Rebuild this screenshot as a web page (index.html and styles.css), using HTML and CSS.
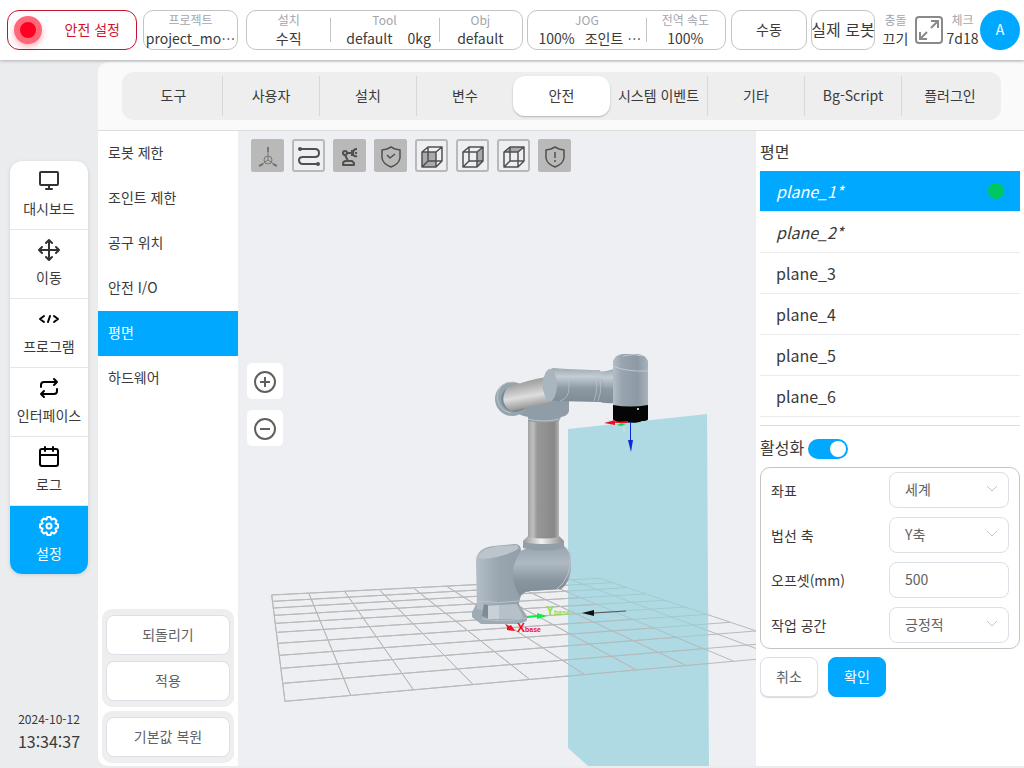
FILE: index.html
```
<!DOCTYPE html>
<html lang="ko">
<head>
    <meta charset="UTF-8">
    <meta name="viewport" content="width=device-width, initial-scale=1.0">
    <title>안전 설정</title>
    <link rel="stylesheet" href="styles.css">
</head>
<body>

    <header class="topbar">
        <button class="card safety"><span class="lamp"></span><span class="safety-text">안전 설정</span></button>
        <div class="card project">
            <div class="cell"><span class="label">프로젝트</span><span class="value">project_mo⋯</span></div>
        </div>
        <div class="card setup">
            <div class="cell"><span class="label">설치</span><span class="value">수직</span></div>
            <div class="cell wide"><span class="label">Tool</span><span class="value pair"><span>default</span><span>0kg</span></span></div>
            <div class="cell"><span class="label">Obj</span><span class="value">default</span></div>
        </div>
        <div class="card jog">
            <div class="cell wide"><span class="label">JOG</span><span class="value jog-value"><span>100%</span><span>조인트 ⋯</span></span></div>
            <div class="cell"><span class="label">전역 속도</span><span class="value">100%</span></div>
        </div>
        <button class="card mode">수동</button>
        <button class="card robot">실제 로봇</button>
        <div class="status">
            <div class="cell"><span class="label">충돌</span><span class="value">끄기</span></div>
            <button class="expand" aria-label="전체 화면">
                <svg width="30" height="30" viewBox="0 0 30 30" fill="none" stroke="#8a8a8a" stroke-width="2">
                    <rect x="2" y="2" width="26" height="26" rx="3"/>
                    <path d="M17 6h7v7M24 6l-7 7M6 17v7h7M6 24l7-7"/>
                </svg>
            </button>
            <div class="cell"><span class="label">체크</span><span class="value">7d18</span></div>
            <button class="avatar">A</button>
        </div>
    </header>

    <div class="layout">
        <aside class="sidebar">
            <nav class="nav">
                <a href="#">
                    <svg viewBox="0 0 24 24"><rect x="3" y="3" width="18" height="13" rx="1"/><path d="M12 16v4M9 20h6"/></svg>
                    대시보드
                </a>
                <a href="#">
                    <svg viewBox="0 0 24 24"><path d="M12 3v18M3 12h18M9 5l3-3 3 3M9 19l3 3 3-3M5 9l-3 3 3 3M19 9l3 3-3 3"/></svg>
                    이동
                </a>
                <a href="#">
                    <svg viewBox="0 0 24 24" class="dark"><path d="M7 9l-4 3 4 3M17 9l4 3-4 3M13 9l-2 6"/></svg>
                    프로그램
                </a>
                <a href="#">
                    <svg viewBox="0 0 24 24" class="dark"><path d="M4 11V9q0-3 3-3h13M17 3l3 3-3 3M20 13v2q0 3-3 3H4M7 15l-3 3 3 3"/></svg>
                    인터페이스
                </a>
                <a href="#">
                    <svg viewBox="0 0 24 24" class="dark"><rect x="3" y="4" width="18" height="17" rx="2"/><path d="M8 2v4M16 2v4M3 10h18"/></svg>
                    로그
                </a>
                <a href="#" class="active">
                    <svg viewBox="0 0 24 24"><circle cx="12" cy="12" r="2.500"/><path d="M21 10.500v3L18.400 14.600 19.500 17.200 17.200 19.500 14.600 18.400 13.500 21h-3L9.400 18.400 6.800 19.500 4.500 17.200 5.600 14.600 3 13.500v-3L5.600 9.400 4.500 6.800 6.800 4.500 9.400 5.600 10.500 3h3L14.600 5.600 17.200 4.500 19.500 6.800 18.400 9.400z"/></svg>
                    설정
                </a>
            </nav>
            <div class="clock">
                <div class="date">2024-10-12</div>
                <div class="time">13:34:37</div>
            </div>
        </aside>

        <main class="main">
            <div class="tabs">
                <button>도구</button>
                <button>사용자</button>
                <button>설치</button>
                <button>변수</button>
                <button class="active">안전</button>
                <button>시스템 이벤트</button>
                <button>기타</button>
                <button>Bg-Script</button>
                <button>플러그인</button>
            </div>

            <div class="content">
                <section class="submenu">
                    <a href="#">로봇 제한</a>
                    <a href="#">조인트 제한</a>
                    <a href="#">공구 위치</a>
                    <a href="#">안전 I/O</a>
                    <a href="#" class="active">평면</a>
                    <a href="#">하드웨어</a>
                    <div class="group first">
                        <button class="btn">되돌리기</button>
                        <button class="btn">적용</button>
                    </div>
                    <div class="group">
                        <button class="btn">기본값 복원</button>
                    </div>
                </section>

                <section class="viewer">
                    <svg class="scene" viewBox="238 131 518 635" preserveAspectRatio="xMidYMid slice">
                        <defs>
                            <linearGradient id="tube" x1="0" x2="1" y1="0" y2="0">
                                <stop offset="0" stop-color="#a2a3a4"/><stop offset=".16" stop-color="#bfbfbf"/>
                                <stop offset=".3" stop-color="#979797"/><stop offset=".85" stop-color="#888"/><stop offset="1" stop-color="#b5b5b5"/>
                            </linearGradient>
                            <linearGradient id="joint" x1="0" x2="1" y1="0" y2="0">
                                <stop offset="0" stop-color="#b4bec7"/><stop offset=".25" stop-color="#98a4ae"/>
                                <stop offset=".7" stop-color="#8d99a4"/><stop offset="1" stop-color="#a8b3bd"/>
                            </linearGradient>
                            <linearGradient id="across" x1="0" x2="0" y1="0" y2="1">
                                <stop offset="0" stop-color="#9da9b2"/><stop offset=".25" stop-color="#c4cdd5"/>
                                <stop offset=".6" stop-color="#8c98a2"/><stop offset="1" stop-color="#7f8b95"/>
                            </linearGradient>
                            <linearGradient id="arm" x1="0" x2=".25" y1="0" y2="1">
                                <stop offset="0" stop-color="#919191"/><stop offset=".3" stop-color="#a8a8a8"/>
                                <stop offset=".65" stop-color="#dedede"/><stop offset="1" stop-color="#929292"/>
                            </linearGradient>
                            <linearGradient id="ring" x1="0" x2="1" y1="0" y2="0">
                                <stop offset="0" stop-color="#999"/><stop offset=".45" stop-color="#f1f1f1"/><stop offset="1" stop-color="#8b8b8b"/>
                            </linearGradient>
                            <linearGradient id="bulge" x1="0" x2="0" y1="0" y2="1">
                                <stop offset="0" stop-color="#98a4ae"/><stop offset=".35" stop-color="#aeb9c2"/>
                                <stop offset=".7" stop-color="#88949e"/><stop offset="1" stop-color="#808c96"/>
                            </linearGradient>
                            <clipPath id="front"><path d="M0 0H955V100L1375 270V450H0z"/></clipPath>
                        </defs>

                        <!-- floor grid -->
                        <g transform="translate(250 560) scale(.3333)" fill="none" stroke="#b9b9b9" stroke-width="3">
                            <path id="grid" d="M65 105L105 424M177 101L302 406M285 96L490 389M390 91L669 373M493 86L839 358M592 80L1003 343M690 75L1158 329M785 71L1308 316M877 65L1450 303M965 60L1587 291M1050 55L1718 280M65 105L1050 55M68 124L1085 68M71 144L1130 83M74 166L1185 102M78 190L1245 121M82 217L1308 141M85 250L1375 163M90 286L1440 187M95 325L1518 213M100 370L1615 245M105 424L1718 280"/>
                        </g>

                        <!-- safety plane, the grid in front of it is drawn again -->
                        <path fill="#95d2db" opacity=".7" d="M568 429L707 414l2 352H588l-20-18z"/>
                        <g transform="translate(250 560) scale(.3333)" fill="none" stroke="#b9b9b9" stroke-width="3" clip-path="url(#front)">
                            <use href="#grid"/>
                        </g>

                        <!-- shoulder and base -->
                        <path fill="#9eabb5" d="M477 603l-5 9v5l9 7h35q9-1 11-4v-4l-8-12z"/>
                        <path fill="url(#joint)" d="M476 562q0-14 17-16l22-2q6 0 6 7l10-4 32-2q8 5 8 19 0 18-10 25l-31 2q-10 1-11 12l-1 6q-20 5-41 0z"/>
                        <path fill="url(#bulge)" d="M521 551l10-5 32 0q7 5 8 18 0 18-10 25l-31 2q-7 0-10 5-15-22 1-45z"/>
                        <path fill="#bcc5cc" d="M478 558q2-9 20-12l19-1 2 3q-6 5-22 9-12 3-19 1z"/>
                        <path fill="#d3d9df" opacity=".8" d="M488 606l11-1v14h-11z"/>
                        <path fill="#b6c0c9" d="M499 605l18-1 6 13-4 2h-20z"/>
                        <path fill="#7e8b94" d="M484 604l4 1v13l-6-2z"/>
                        <path fill="none" stroke="#b8c2c9" d="M570 552q3 25-14 38M478 601q20 3 41 0M482 619q23 4 44-1"/>
                        <path fill="#929fa9" d="M523 541h41v7q-20 5-41 0z"/>
                        <path fill="url(#ring)" d="M528 536h31l5 5q-2 3-20 3t-21-3z"/>
                        <path fill="url(#tube)" d="M528 420h31v117q-15 3-31 0z"/>

                        <!-- elbow and forearm -->
                        <path fill="#909da7" d="M512 409l53-17 4 9v10q-1 5-8 6l-2 4q-15 3-31 0v-4q-11-2-16-8z"/>
                        <ellipse cx="512" cy="399" rx="17" ry="17" fill="#96a4ae"/>
                        <ellipse cx="515" cy="399" rx="14" ry="13" fill="#7d8991"/>
                        <path fill="url(#arm)" d="M507 388q20-8 39-11 10 11 5 25l-40 9q-13-8-4-23z"/>
                        <path fill="none" stroke="#bac4cb" d="M514 382q-16-1-17 16 2 13 14 15M528 419q14 4 32 0"/>

                        <!-- wrist -->
                        <path fill="url(#across)" d="M597 372q8 0 17-3v34q-10 1-17-2z"/>
                        <path fill="url(#across)" d="M553 368q30 2 47 2 8 16 0 32l-45-1q-11-2-12-15 0-15 10-18z"/>
                        <ellipse cx="550" cy="385" rx="7" ry="16" fill="#a9b5bf"/>
                        <path fill="none" stroke="#bbc4cb" stroke-opacity=".7" d="M558 368q12 8 11 20 0 10-9 13M593 370q7 16 1 31M597 370q7 16 1 31"/>
                        <path fill="url(#joint)" d="M613 361q2-6 10-7h14q9 1 11 7v46h-35z"/>
                        <path fill="none" stroke="#c1cad1" d="M613 366q13 6 35 5M623 356q10-3 20 0"/>
                        <path fill="#050505" d="M613 405q17 3 35 0v14q0 2-6 2-4 3-22 1-7 0-7-3z"/>
                        <circle cx="638" cy="409" r="1" fill="#fff"/>

                        <!-- tool axes -->
                        <path fill="#18d33e" d="M617 425l4-2 5 1-5 2z"/>
                        <path fill="#e4142c" d="M604 423l11-3v2l13-1v2h-13v2z"/>
                        <path fill="#0a2bd8" d="M630 422h1v18h2l-2 12-3-12h2z"/>
                        <path stroke="#ddd" d="M624 427v5M607 418l3 3" fill="none"/>

                        <!-- base axes -->
                        <path fill="#12ea48" d="M527 616l10-1v-2l10 3-10 3v-2l-10 1z"/>
                        <path fill="#f0101e" d="M505 624l4 2 2-1 4 6-8-1v-3z"/>
                        <path fill="#111" d="M582 613l12-3v6z"/>
                        <path fill="none" stroke="#555" d="M594 613l32-2"/>
                        <text x="517" y="632" class="axis x-axis">X<tspan class="axis-sub">base</tspan></text>
                        <text x="546" y="615" class="axis y-axis">Y<tspan class="axis-sub">base</tspan></text>
                    </svg>

                    <div class="tools">
                        <button class="on" aria-label="축"><svg viewBox="0 0 33 33"><g stroke-width="1" stroke="#777"><circle cx="17" cy="21" r="4"/><path d="M17 8v13l-9 6M17 21l9 6"/><path d="M17 8v5M8 27l4-2M26 27l-4-2" stroke-width="2"/></g></svg></button>
                        <button aria-label="경로"><svg viewBox="0 0 33 33"><path d="M8 10h15q4 0 4 4t-4 4H11q-4 0-4 3 0 4 4 4h15"/><circle cx="8" cy="10" r="1"/><circle cx="26" cy="25" r="1"/></svg></button>
                        <button class="on" aria-label="로봇"><svg viewBox="0 0 33 33"><g><circle cx="12" cy="14" r="2"/><path d="M14 14h5M19 11v6M24 10q-4 0-4 4t4 3M22 14h2M12 16l3 6M10 25q0-3 3-3h6l2 2v2H10z"/></g></svg></button>
                        <button class="on" aria-label="안전"><svg viewBox="0 0 33 33"><g stroke-width="1.500"><path d="M17 8l-4 2-5 1v8q1 6 9 9 8-3 9-9v-8l-5-1z"/><path d="M13 16l3 3 5-4"/></g></svg></button>
                        <button aria-label="앞면"><svg viewBox="0 0 33 33"><path fill="#aaa" stroke="none" d="M7 13h14v15H7z"/><path stroke-width="1.500" d="M7 13h14v15H7zM7 13l6-5h14l-6 5M27 8v14l-6 6M13 8v14M13 22h14M13 22l-6 6"/></svg></button>
                        <button aria-label="옆면"><svg viewBox="0 0 33 33"><path fill="#aaa" stroke="none" d="M21 13l6-5v14l-6 6z"/><path stroke-width="1.500" d="M7 13h14v15H7zM7 13l6-5h14l-6 5M27 8v14l-6 6M13 8v14M13 22h14M13 22l-6 6"/></svg></button>
                        <button aria-label="윗면"><svg viewBox="0 0 33 33"><path fill="#aaa" stroke="none" d="M7 13l6-5h14l-6 5z"/><path stroke-width="1.500" d="M7 13h14v15H7zM7 13l6-5h14l-6 5M27 8v14l-6 6M13 8v14M13 22h14M13 22l-6 6"/></svg></button>
                        <button class="on" aria-label="경고"><svg viewBox="0 0 33 33"><g stroke-width="1.500"><path d="M17 8l-4 2-5 1v8q1 6 9 9 8-3 9-9v-8l-5-1z"/><path d="M17 13v6M17 21v2"/></g></svg></button>
                    </div>

                    <div class="zoom">
                        <button aria-label="확대"><svg viewBox="0 0 36 36"><circle cx="18" cy="19" r="10"/><path d="M13 19h10M18 14v10"/></svg></button>
                        <button aria-label="축소"><svg viewBox="0 0 36 36"><circle cx="18" cy="19" r="10"/><path d="M13 19h10"/></svg></button>
                    </div>
                </section>

                <section class="panel">
                    <h2>평면</h2>
                    <ul class="planes">
                        <li class="active changed">plane_1*<span class="dot"></span></li>
                        <li class="changed">plane_2*</li>
                        <li>plane_3</li>
                        <li>plane_4</li>
                        <li>plane_5</li>
                        <li>plane_6</li>
                    </ul>
                    <div class="enable">
                        <label for="enable">활성화</label>
                        <input type="checkbox" id="enable" class="switch" checked>
                    </div>
                    <div class="form">
                        <div class="row">
                            <label for="coord">좌표</label>
                            <div class="field"><select id="coord"><option>세계</option></select><svg viewBox="0 0 12 8"><path d="M1 1l5 5 5-5"/></svg></div>
                        </div>
                        <div class="row">
                            <label for="normal">법선 축</label>
                            <div class="field"><select id="normal"><option>Y축</option></select><svg viewBox="0 0 12 8"><path d="M1 1l5 5 5-5"/></svg></div>
                        </div>
                        <div class="row">
                            <label for="offset">오프셋(mm)</label>
                            <div class="field"><input type="text" id="offset" value="500"></div>
                        </div>
                        <div class="row">
                            <label for="space">작업 공간</label>
                            <div class="field"><select id="space"><option>긍정적</option></select><svg viewBox="0 0 12 8"><path d="M1 1l5 5 5-5"/></svg></div>
                        </div>
                    </div>
                    <div class="actions">
                        <button class="btn cancel">취소</button>
                        <button class="btn primary">확인</button>
                    </div>
                </section>
            </div>
        </main>
    </div>

</body>
</html>
```
FILE: styles.css
```
* {
    box-sizing: border-box;
    margin: 0;
    padding: 0;
}

body {
    display: flex;
    flex-direction: column;
    min-height: 100vh;
    background: #ebecee;
    color: #3a3a3a;
    font-family: "Noto Sans CJK KR", "Noto Sans", sans-serif;
    font-size: 14px;
    line-height: 20px;
}

button, input, select {
    font: inherit;
    color: inherit;
}

button {
    padding-bottom: 2px;
    border: none;
    background: none;
    cursor: pointer;
    white-space: nowrap;
}

a {
    color: inherit;
    text-decoration: none;
}

svg {
    display: block;
}

/* top bar */
.topbar {
    display: flex;
    align-items: center;
    gap: 4px;
    height: 60px;
    padding: 0 4px 0 7px;
    background: #fff;
    box-shadow: 0 1px 3px rgba(0, 0, 0, 0.25);
    z-index: 1;
}

.card {
    display: flex;
    align-items: center;
    justify-content: center;
    min-width: 0;
    height: 40px;
    border: 1px solid #c4c4c4;
    border-radius: 10px;
    background: #fff;
}

.safety {
    flex: 1 1 130px;
    justify-content: space-between;
    padding: 0 16px 0 6px;
    border-color: #c3142d;
    border-radius: 12px;
    color: #d0142d;
}

.safety-text {
    padding-bottom: 2px;
}

.lamp {
    width: 28px;
    height: 28px;
    border: 6px solid #ff6878;
    border-radius: 50%;
    background: #ff0022;
    box-shadow: 0 3px 6px rgba(255, 0, 34, 0.3);
}

.project {
    flex: 1 1 95px;
    margin-left: 2px;
}

.setup {
    flex: 3 1 277px;
    margin-left: 4px;
}

.jog {
    flex: 2 1 199px;
}

.mode {
    flex: 1 1 76px;
    margin-left: 1px;
}

.robot {
    flex: 1 1 64px;
    font-size: 16px;
}

.cell {
    display: flex;
    flex: 84;
    flex-direction: column;
    align-items: center;
    padding-bottom: 2px;
    white-space: nowrap;
}

.cell + .cell {
    background: linear-gradient(#c4c4c4, #c4c4c4) left center / 1px 24px no-repeat;
}

.setup .wide {
    flex: 109;
}

.jog .wide {
    flex: 125;
}

.label {
    color: #a2a5aa;
    font-size: 12px;
    line-height: 18px;
}

.value {
    line-height: 18px;
}

.pair {
    display: flex;
    gap: 15px;
    padding-left: 8px;
}

.jog-value {
    display: flex;
    gap: 10px;
    padding-left: 6px;
}

.status {
    display: flex;
    align-items: center;
    gap: 1px;
}

.status .cell {
    flex: 0 0 33px;
    background: none;
}

.expand {
    display: flex;
    justify-content: center;
    width: 32px;
    padding: 0;
}

.avatar {
    width: 40px;
    height: 40px;
    border-radius: 50%;
    background: #00a8ff;
    color: #fff;
}

/* left column */
.layout {
    display: flex;
    flex: 1;
    padding-top: 2px;
}

.sidebar {
    display: flex;
    flex: 0 0 98px;
    flex-direction: column;
    justify-content: space-between;
    padding: 99px 10px 15px;
}

.nav {
    overflow: hidden;
    border-radius: 12px;
    background: #fff;
    box-shadow: 0 1px 4px rgba(0, 0, 0, 0.12);
}

.nav a {
    display: flex;
    flex-direction: column;
    align-items: center;
    gap: 5px;
    height: 69px;
    padding-top: 8px;
    border-bottom: 1px solid #e6e6e6;
}

.nav svg {
    width: 24px;
    height: 24px;
    fill: none;
    stroke: #333;
    stroke-width: 2;
    stroke-linecap: round;
    stroke-linejoin: round;
}

.nav .dark {
    stroke: #000;
}

.nav .active {
    height: 68px;
    border-bottom: none;
    background: #00a8ff;
    color: #fff;
}

.nav .active svg {
    stroke: #fff;
}

.clock {
    text-align: center;
}

.date {
    font-size: 12px;
}

.time {
    font-size: 16px;
    line-height: 24px;
}

/* main area */
.main {
    display: flex;
    flex: 1;
    flex-direction: column;
    min-width: 0;
    margin-bottom: 2px;
    overflow: hidden;
    border-radius: 10px 0 0 10px;
    background: #fafafa;
}

.tabs {
    display: grid;
    grid-template-columns: repeat(9, 1fr);
    margin: 10px 23px 10px 24px;
    padding: 4px 3px;
    border-radius: 12px;
    background: #eee;
}

.tabs button {
    height: 40px;
    border-left: 1px solid #d8d8d8;
}

.tabs button:first-child,
.tabs .active,
.tabs .active + button {
    border-left: none;
}

.tabs .active {
    border-radius: 12px;
    background: #fff;
    box-shadow: 0 1px 2px rgba(0, 0, 0, 0.25);
}

.content {
    display: flex;
    flex: 1;
    border-top: 1px solid #dcdcdc;
}

.submenu {
    display: flex;
    flex: 0 0 140px;
    flex-direction: column;
    padding-bottom: 3px;
    background: #fff;
}

.submenu a {
    padding: 11px 10px 14px;
}

.submenu .active {
    background: #00a8ff;
    color: #fff;
}

.group {
    display: flex;
    flex-direction: column;
    gap: 6px;
    margin: 4px 4px 0;
    padding: 6px 4px;
    border-radius: 10px;
    background: #eee;
}

.first {
    margin-top: auto;
}

.btn {
    height: 40px;
    border: 1px solid #dcdfe6;
    border-radius: 8px;
    background: #fff;
    color: #606266;
}

/* 3d view */
.viewer {
    position: relative;
    flex: 1;
    padding: 8px 9px;
    background: #eeeff3;
}

.scene {
    position: absolute;
    inset: 0;
    width: 100%;
    height: 100%;
}

.axis {
    font-family: "Liberation Sans", sans-serif;
    font-size: 12px;
    font-weight: bold;
}

.axis-sub {
    font-size: 7px;
}

.x-axis {
    fill: #f0101e;
}

.y-axis {
    fill: #86e255;
}

.tools {
    position: relative;
    display: flex;
    gap: 8px;
    padding-left: 4px;
}

.tools button {
    width: 33px;
    height: 33px;
    padding: 0;
    border-radius: 3px;
    box-shadow: inset 0 0 0 2px #b9b9b9;
}

.tools .on {
    background: #b9b9b9;
}

.tools svg {
    fill: none;
    stroke: #505050;
    stroke-width: 2;
    stroke-linejoin: round;
}

.zoom {
    position: relative;
    display: grid;
    gap: 11px;
    width: 36px;
    margin-top: 191px;
}

.zoom button {
    height: 36px;
    padding: 0;
    border-radius: 5px;
    background: #fff;
}

.zoom svg {
    fill: none;
    stroke: #606060;
    stroke-width: 2;
}

/* plane settings */
.panel {
    flex: 0 0 268px;
    padding: 8px 4px;
    background: #fff;
}

h2 {
    font-size: 16px;
    font-weight: normal;
    line-height: 24px;
}

.planes {
    margin-top: 8px;
    padding-bottom: 8px;
    border-bottom: 1px solid #dcdcdc;
    list-style: none;
    font-size: 16px;
}

.planes li {
    display: flex;
    align-items: center;
    justify-content: space-between;
    height: 41px;
    padding: 0 16px;
    border-bottom: 1px solid #ebebeb;
}

.planes .active {
    background: #00a8ff;
    background-clip: padding-box;
    color: #fff;
}

.changed {
    font-style: italic;
}

.dot {
    width: 16px;
    height: 16px;
    border-radius: 50%;
    background: #00c860;
}

.enable {
    display: flex;
    align-items: center;
    gap: 4px;
    padding: 9px 0 4px;
    font-size: 16px;
}

.enable label {
    padding-bottom: 4px;
    line-height: 24px;
}

.switch {
    appearance: none;
    display: flex;
    justify-content: flex-end;
    width: 40px;
    height: 20px;
    padding: 2px;
    border-radius: 10px;
    background: #00a8ff;
    cursor: pointer;
}

.switch::before {
    content: "";
    width: 16px;
    height: 16px;
    border-radius: 50%;
    background: #fff;
}

.switch:not(:checked) {
    justify-content: flex-start;
    background: #c4c4c4;
}

.form {
    padding: 0 10px;
    border: 1px solid #c4c4c4;
    border-radius: 10px;
}

.row {
    display: flex;
    align-items: center;
    justify-content: space-between;
    height: 45px;
    padding-bottom: 1px;
}

.field {
    position: relative;
    width: 120px;
}

.field select,
.field input {
    appearance: none;
    width: 100%;
    height: 36px;
    padding: 0 15px 2px;
    border: 1px solid #dcdfe6;
    border-radius: 8px;
    background: #fff;
    color: #606266;
}

.field svg {
    position: absolute;
    top: 13px;
    right: 11px;
    width: 12px;
    fill: none;
    stroke: #c0c4cc;
    pointer-events: none;
}

.actions {
    display: flex;
    gap: 10px;
    margin-top: 8px;
}

.actions .btn {
    width: 58px;
}

.cancel {
    box-shadow: 0 1px 1px rgba(0, 0, 0, 0.15);
}

.actions .primary {
    border-color: #00a8ff;
    background: #00a8ff;
    color: #fff;
}
```
